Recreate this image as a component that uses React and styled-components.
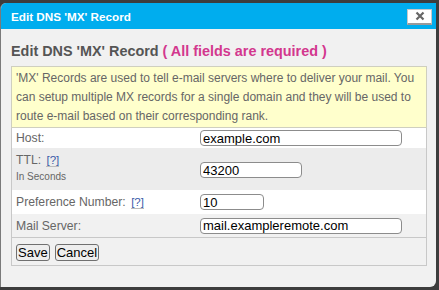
import React from 'react';
import styled, { createGlobalStyle } from 'styled-components';

const Global = createGlobalStyle`
  html, body {
    margin: 0;
    padding: 0;
    background: #3d3d3d;
    font-family: "Liberation Sans", Arial, sans-serif;
  }
`;

const Dialog = styled.div`
  margin-top: 3px;
  width: 436px;
  height: 284px;
  box-sizing: border-box;
  background: #f1f1f1;
  border-left: 1px solid #7a7a7a;
  border-radius: 6px 0 6px 0;
  display: flex;
  flex-direction: column;
  overflow: hidden;
`;

const TitleBar = styled.div`
  height: 26px;
  background: #00adee;
  display: flex;
  align-items: center;
  justify-content: space-between;
  padding: 0 4px 0 10px;
  color: #fff;
  font-weight: bold;
  font-size: 11.7px;
`;

const CloseButton = styled.button`
  width: 25px;
  height: 16px;
  padding: 0;
  background: #fff;
  border: 1px solid #c8c8c8;
  border-bottom: 2px solid #9a9a9a;
  display: flex;
  align-items: center;
  justify-content: center;
  margin-top: 1px;
`;

const Content = styled.div`
  padding: 14px 9px 0 10px;
`;

const Heading = styled.h2`
  margin: 0 0 6px;
  font-size: 14.4px;
  font-weight: bold;
  color: #555;
  line-height: 17px;
`;

const Required = styled.span`
  color: #d3378e;
`;

const Info = styled.div`
  background: #ffffcc;
  border: 1px solid #cfcfbf;
  color: #666;
  font-size: 12px;
  line-height: 19px;
  padding: 2px 4px 1px 4px;
`;

const Table = styled.div`
  border: 1px solid #c8c8c8;
  border-top: none;
`;

const Row = styled.div`
  display: grid;
  grid-template-columns: 184px 1fr;
  align-items: ${p => (p.$top ? 'start' : 'center')};
  height: ${p => p.$h}px;
  background: ${p => p.$bg};
  padding-left: 4px;
  box-sizing: border-box;
`;

const Label = styled.div`
  color: #666;
  font-size: 12.2px;
  line-height: 16px;
`;

const Small = styled.div`
  font-size: 10px;
  line-height: 12px;
  margin-top: 3px;
`;

const Help = styled.a`
  color: #3a5ba8;
  font-size: 11.5px;
  text-decoration: none;
  border-bottom: 1px solid #bbb;
  margin-left: 2px;
`;

const Input = styled.input`
  box-sizing: border-box;
  width: ${p => p.$w}px;
  height: 16px;
  border: 1px solid #8c8c8c;
  border-radius: 4px;
  padding: 0 2px;
  font-family: "Liberation Sans", Arial, sans-serif;
  font-size: 13px;
  color: #000;
  background: #fff;
  outline: none;
  margin-top: ${p => p.$mt || 0}px;
`;

const Buttons = styled.div`
  display: flex;
  gap: 5px;
  padding: 5px 0 3px 4px;
  height: 19px;
  border-top: 1px solid #c8c8c8;
  align-items: center;
`;

const Btn = styled.button`
  font-family: "Liberation Sans", Arial, sans-serif;
  font-size: 13px;
  color: #000;
  background: #eee;
  border: 1px solid #707070;
  border-radius: 3px;
  padding: 0 1px;
  height: 17px;
  line-height: 14px;
`;

export default function App() {
  return (
    <>
      <Global />
      <Dialog>
        <TitleBar>
          <span>Edit DNS 'MX' Record</span>
          <CloseButton aria-label="close">
            <svg width="10" height="10" viewBox="0 0 10 10">
              <path d="M1.5 1.5L8.5 8.5M8.5 1.5L1.5 8.5" stroke="#666" strokeWidth="2.2" />
            </svg>
          </CloseButton>
        </TitleBar>
        <Content>
          <Heading>
            Edit DNS 'MX' Record <Required>( All fields are required )</Required>
          </Heading>
          <Info>
            'MX' Records are used to tell e-mail servers where to deliver your mail. You can setup multiple MX records for a single domain and they will be used to route e-mail based on their corresponding rank.
          </Info>
          <Table>
            <Row $h={20} $bg="#fff">
              <Label>Host:</Label>
              <Input $w={202} defaultValue="example.com" />
            </Row>
            <Row $h={42} $bg="#ececec" $top>
              <Label style={{ paddingTop: 4 }}>
                TTL: <Help href="#">[?]</Help>
                <Small>In Seconds</Small>
              </Label>
              <Input $w={102} $mt={14} defaultValue="43200" />
            </Row>
            <Row $h={24} $bg="#fff">
              <Label>
                Preference Number: <Help href="#">[?]</Help>
              </Label>
              <Input $w={64} defaultValue="10" />
            </Row>
            <Row $h={23} $bg="#f1f1f1">
              <Label>Mail Server:</Label>
              <Input $w={202} defaultValue="mail.exampleremote.com" />
            </Row>
            <Buttons>
              <Btn>Save</Btn>
              <Btn>Cancel</Btn>
            </Buttons>
          </Table>
        </Content>
      </Dialog>
    </>
  );
}
